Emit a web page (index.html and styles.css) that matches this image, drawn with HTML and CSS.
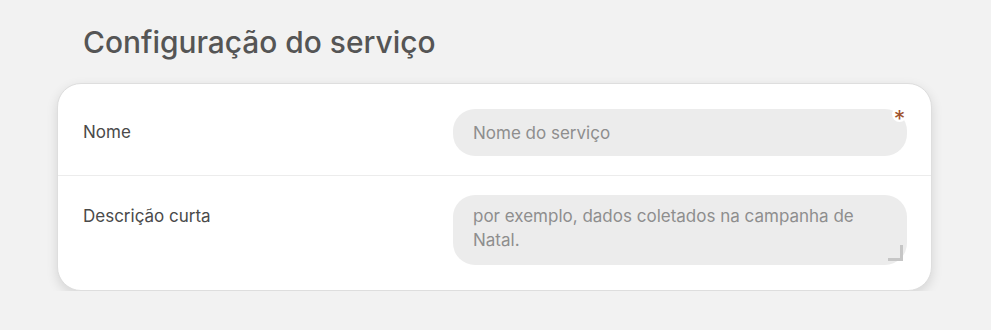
FILE: index.html
```html
<!DOCTYPE html>
<html lang="pt">
<head>
    <meta charset="UTF-8">
    <meta name="viewport" content="width=device-width, initial-scale=1.0">
    <title>Configuração do serviço</title>
    <link rel="stylesheet" href="styles.css">
</head>
<body>
    <div class="page">
        <h1>Configuração do serviço</h1>
        <div class="card">
            <div class="row">
                <label class="label" for="nome">Nome</label>
                <div class="field">
                    <input id="nome" class="input" type="text" placeholder="Nome do serviço">
                    <span class="required">*</span>
                </div>
            </div>
            <div class="row">
                <label class="label" for="desc">Descrição curta</label>
                <div class="field">
                    <textarea id="desc" class="input textarea" placeholder="por exemplo, dados coletados na campanha de Natal."></textarea>
                    <span class="grip"></span>
                </div>
            </div>
        </div>
    </div>
</body>
</html>
```

FILE: styles.css
```css
body {
    margin: 0;
    background: #f2f2f2;
    font-family: Inter, "Noto Sans", sans-serif;
    color: #4a4a4a;
}

.page {
    padding: 22px 59px 0 57px;
}

h1 {
    margin: 0 0 21px 26px;
    font-size: 29.9px;
    font-weight: 500;
    line-height: 40px;
    color: #555;
}

.card {
    background: #fff;
    border: 1px solid #dedede;
    border-radius: 24px;
    padding: 5px 0 3px;
    box-shadow: 0 4px 12px rgba(0, 0, 0, 0.12);
}

.row {
    display: flex;
    justify-content: space-between;
    padding: 20px 24px 19px 25px;
}

.row + .row {
    border-top: 1px solid #ececec;
    padding: 19px 24px 22px 25px;
}

.label {
    font-size: 17px;
    line-height: 24px;
    padding-top: 11px;
    color: #4a4a4a;
}

.row + .row .label {
    padding-top: 9px;
}

.field {
    position: relative;
    width: 454px;
}

.input {
    display: block;
    box-sizing: border-box;
    width: 100%;
    height: 47px;
    border: none;
    outline: none;
    border-radius: 22px;
    background: #ececec;
    padding: 0 20px;
    font-family: inherit;
    font-size: 17px;
    color: #4a4a4a;
}

.input::placeholder {
    color: #8e8e8e;
}

.textarea {
    height: 70px;
    padding: 9px 20px;
    line-height: 24px;
    resize: none;
}

.required {
    position: absolute;
    top: -2px;
    right: 0;
    width: 15px;
    height: 15px;
    border-radius: 50%;
    background: #fff;
    color: #a0522d;
    font-size: 23px;
    line-height: 25px;
    text-align: center;
}

.grip {
    position: absolute;
    right: 4px;
    bottom: 4px;
    width: 12px;
    height: 13px;
    border-right: 3px solid #c6c6c6;
    border-bottom: 3px solid #c6c6c6;
}
```
